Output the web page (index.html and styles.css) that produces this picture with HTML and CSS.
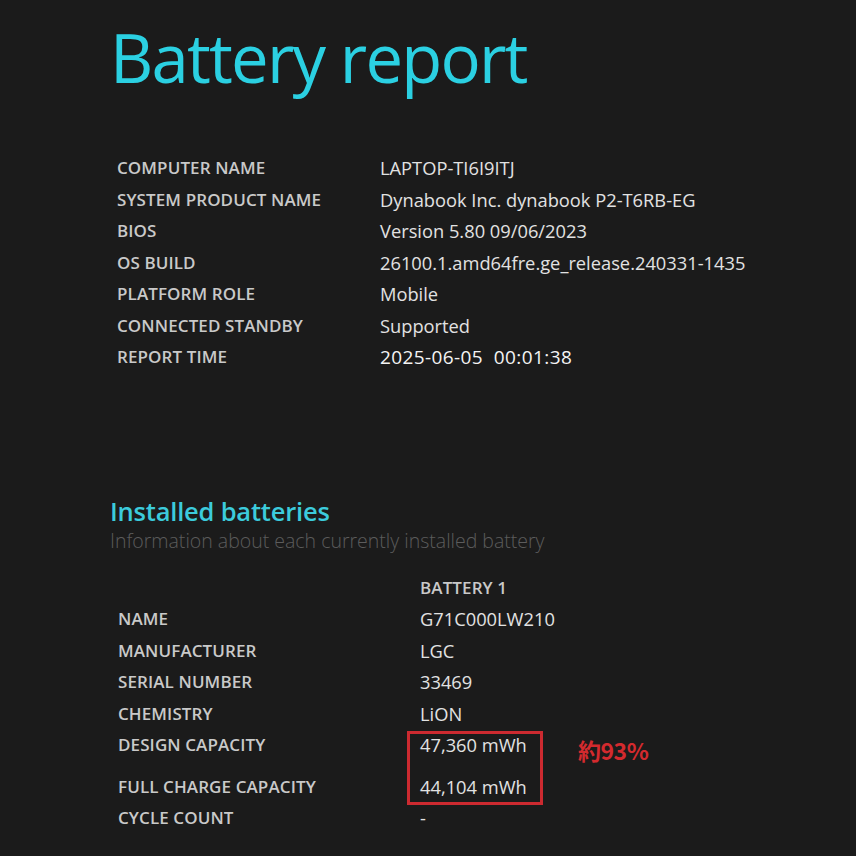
FILE: index.html
```html
<!DOCTYPE html>
<html lang="en">
<head>
<meta charset="utf-8">
<title>Battery report</title>
<link rel="stylesheet" href="styles.css">
</head>
<body>
<main class="report">
  <h1 class="title">Battery report</h1>
  <div class="info">
    <div class="row"><span class="label">COMPUTER NAME</span><span class="value">LAPTOP-TI6I9ITJ</span></div>
    <div class="row"><span class="label">SYSTEM PRODUCT NAME</span><span class="value">Dynabook Inc. dynabook P2-T6RB-EG</span></div>
    <div class="row"><span class="label">BIOS</span><span class="value">Version 5.80 09/06/2023</span></div>
    <div class="row"><span class="label">OS BUILD</span><span class="value">26100.1.amd64fre.ge_release.240331-1435</span></div>
    <div class="row"><span class="label">PLATFORM ROLE</span><span class="value">Mobile</span></div>
    <div class="row"><span class="label">CONNECTED STANDBY</span><span class="value">Supported</span></div>
    <div class="row"><span class="label">REPORT TIME</span><span class="value strong">2025-06-05&nbsp; 00:01:38</span></div>
  </div>

  <section class="batteries">
    <h2 class="section-title">Installed batteries</h2>
    <p class="section-sub">Information about each currently installed battery</p>
    <div class="btable">
      <div class="brow head"><span class="label"></span><span class="value colhead">BATTERY 1</span></div>
      <div class="brow"><span class="label">NAME</span><span class="value">G71C000LW210</span></div>
      <div class="brow"><span class="label">MANUFACTURER</span><span class="value">LGC</span></div>
      <div class="brow"><span class="label">SERIAL NUMBER</span><span class="value">33469</span></div>
      <div class="brow"><span class="label">CHEMISTRY</span><span class="value">LiON</span></div>
      <div class="brow"><span class="label">DESIGN CAPACITY</span><span class="value">47,360 mWh</span></div>
      <div class="brow spaced"><span class="label">FULL CHARGE CAPACITY</span><span class="value">44,104 mWh</span></div>
      <div class="brow"><span class="label">CYCLE COUNT</span><span class="value">-</span></div>
      <div class="highlight"></div>
      <div class="note">約93%</div>
    </div>
  </section>
</main>
</body>
</html>
```

FILE: styles.css
```css
html, body {
  margin: 0;
  padding: 0;
  background: #1b1b1b;
}
body {
  width: 856px;
  height: 856px;
  overflow: hidden;
  font-family: "Open Sans", "Noto Sans", sans-serif;
  color: #dedede;
}
.report {
  padding: 12px 0 0 0;
}
.title {
  margin: 0 0 0 110px;
  font-family: "Open Sans", sans-serif;
  font-weight: 400;
  font-size: 67px;
  line-height: 90px;
  color: #2bd0e2;
  letter-spacing: -1.8px;
}
.info {
  margin: 50px 0 0 117px;
  display: flex;
  flex-direction: column;
}
.row, .brow {
  display: flex;
  align-items: center;
  height: 31.5px;
}
.label {
  font-size: 17px;
  font-weight: 600;
  color: #c9c9c9;
  letter-spacing: 0.1px;
}
.row .label {
  width: 263px;
  flex: none;
}
.value {
  font-size: 18.3px;
  font-weight: 400;
  color: #e2e2e2;
  letter-spacing: 0;
}
.value.strong {
  color: #f4f4f4;
  font-size: 19px;
  letter-spacing: 0.4px;
}
.batteries {
  margin: 123px 0 0 110px;
}
.section-title {
  margin: 0;
  font-size: 25.5px;
  font-weight: 600;
  line-height: 30px;
  color: #3ccbdc;
  letter-spacing: -0.2px;
}
.section-sub {
  margin: 0;
  font-size: 19.5px;
  font-weight: 300;
  line-height: 30px;
  color: #5c5c5c;
  letter-spacing: 0;
}
.btable {
  position: relative;
  margin: 16px 0 0 8px;
  display: flex;
  flex-direction: column;
}
.brow .label {
  width: 302px;
  flex: none;
}
.colhead {
  font-size: 17px;
  font-weight: 600;
  color: #c9c9c9;
  letter-spacing: 0.1px;
}
.brow.spaced {
  height: 41.5px;
  padding-top: 10px;
  box-sizing: border-box;
}
.highlight {
  position: absolute;
  left: 289px;
  top: 159px;
  width: 130px;
  height: 68px;
  border: 3px solid #cc2a30;
}
.note {
  position: absolute;
  left: 460px;
  top: 162px;
  font-family: "Noto Sans CJK JP", "Noto Sans", sans-serif;
  font-weight: 700;
  font-size: 23px;
  line-height: 32px;
  color: #d42a2e;
  letter-spacing: -0.5px;
}
```
